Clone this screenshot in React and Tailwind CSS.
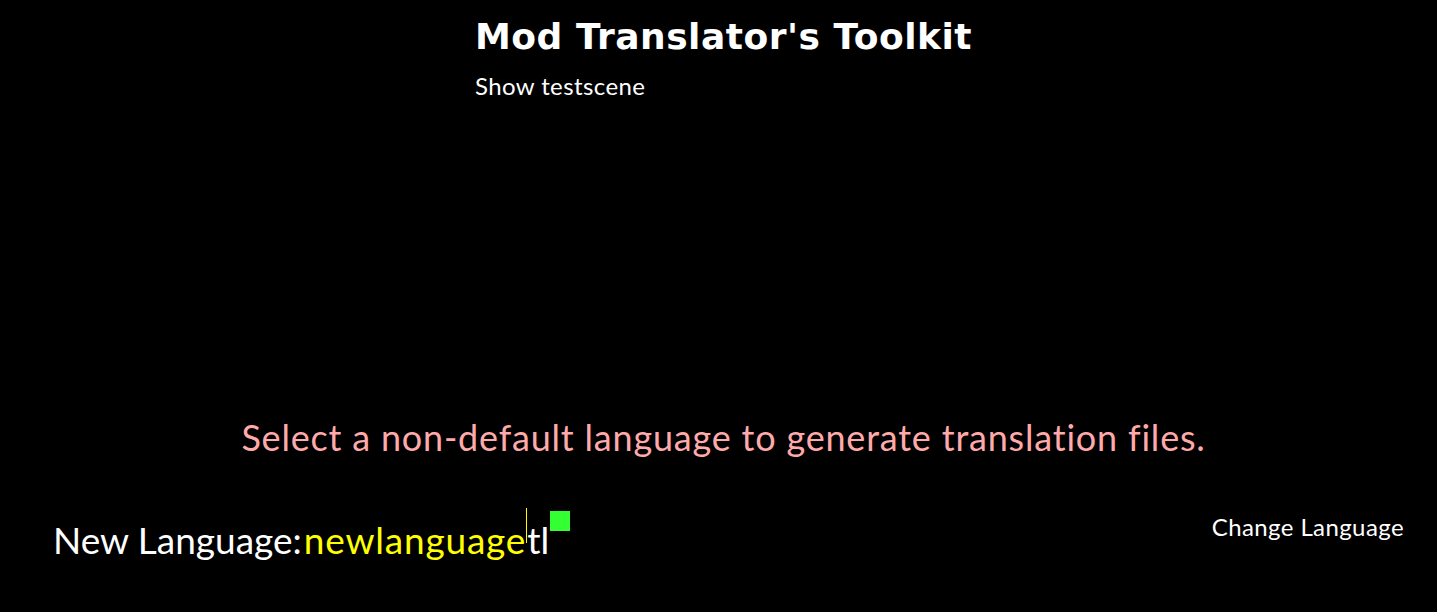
export default function App() {
  return (
    <div className="w-[1437px] h-[612px] bg-black text-white flex flex-col overflow-hidden" style={{ fontFamily: 'Lato, "Noto Sans", sans-serif' }}>
      <div className="flex justify-center pt-[14px]">
        <div className="flex flex-col items-start pl-[10px]">
          <h1 className="text-[36px] leading-[46px] font-bold tracking-[0.5px] text-white" style={{ fontFamily: '"DejaVu Sans", sans-serif' }}>
            Mod Translator's Toolkit
          </h1>
          <div className="text-[24px] leading-[30px] mt-[11px] tracking-[0.4px]">Show testscene</div>
        </div>
      </div>
      <div className="flex-1" />
      <div className="flex justify-center text-[36px] leading-[44px] tracking-[0.8px] text-[#ffaaaa] pl-[10px]">
        Select a non-default language to generate translation files.
      </div>
      <div className="flex items-start justify-between px-[33px] mt-[64px] h-[89px]">
        <div className="flex items-start pl-[20px]">
          <div className="text-[37px] leading-[44px] mt-[-5px] flex items-baseline">
            <span className="text-white">New Language:</span>
            <span className="text-[#ffff00] ml-[2px] tracking-[0.8px]">newlanguage</span>
            <span className="relative text-white">
              <span className="absolute left-0 top-[-10px] w-[1px] h-[35px] bg-[#ffff00]" />
              <span className="pl-[1px]">tl</span>
            </span>
          </div>
          <div className="w-[20px] h-[20px] bg-[#33ff33] mt-[-12px] ml-[1px]" />
        </div>
        <div className="text-[24px] leading-[30px] mt-[-11px] tracking-[0.4px]">Change Language</div>
      </div>
    </div>
  );
}
